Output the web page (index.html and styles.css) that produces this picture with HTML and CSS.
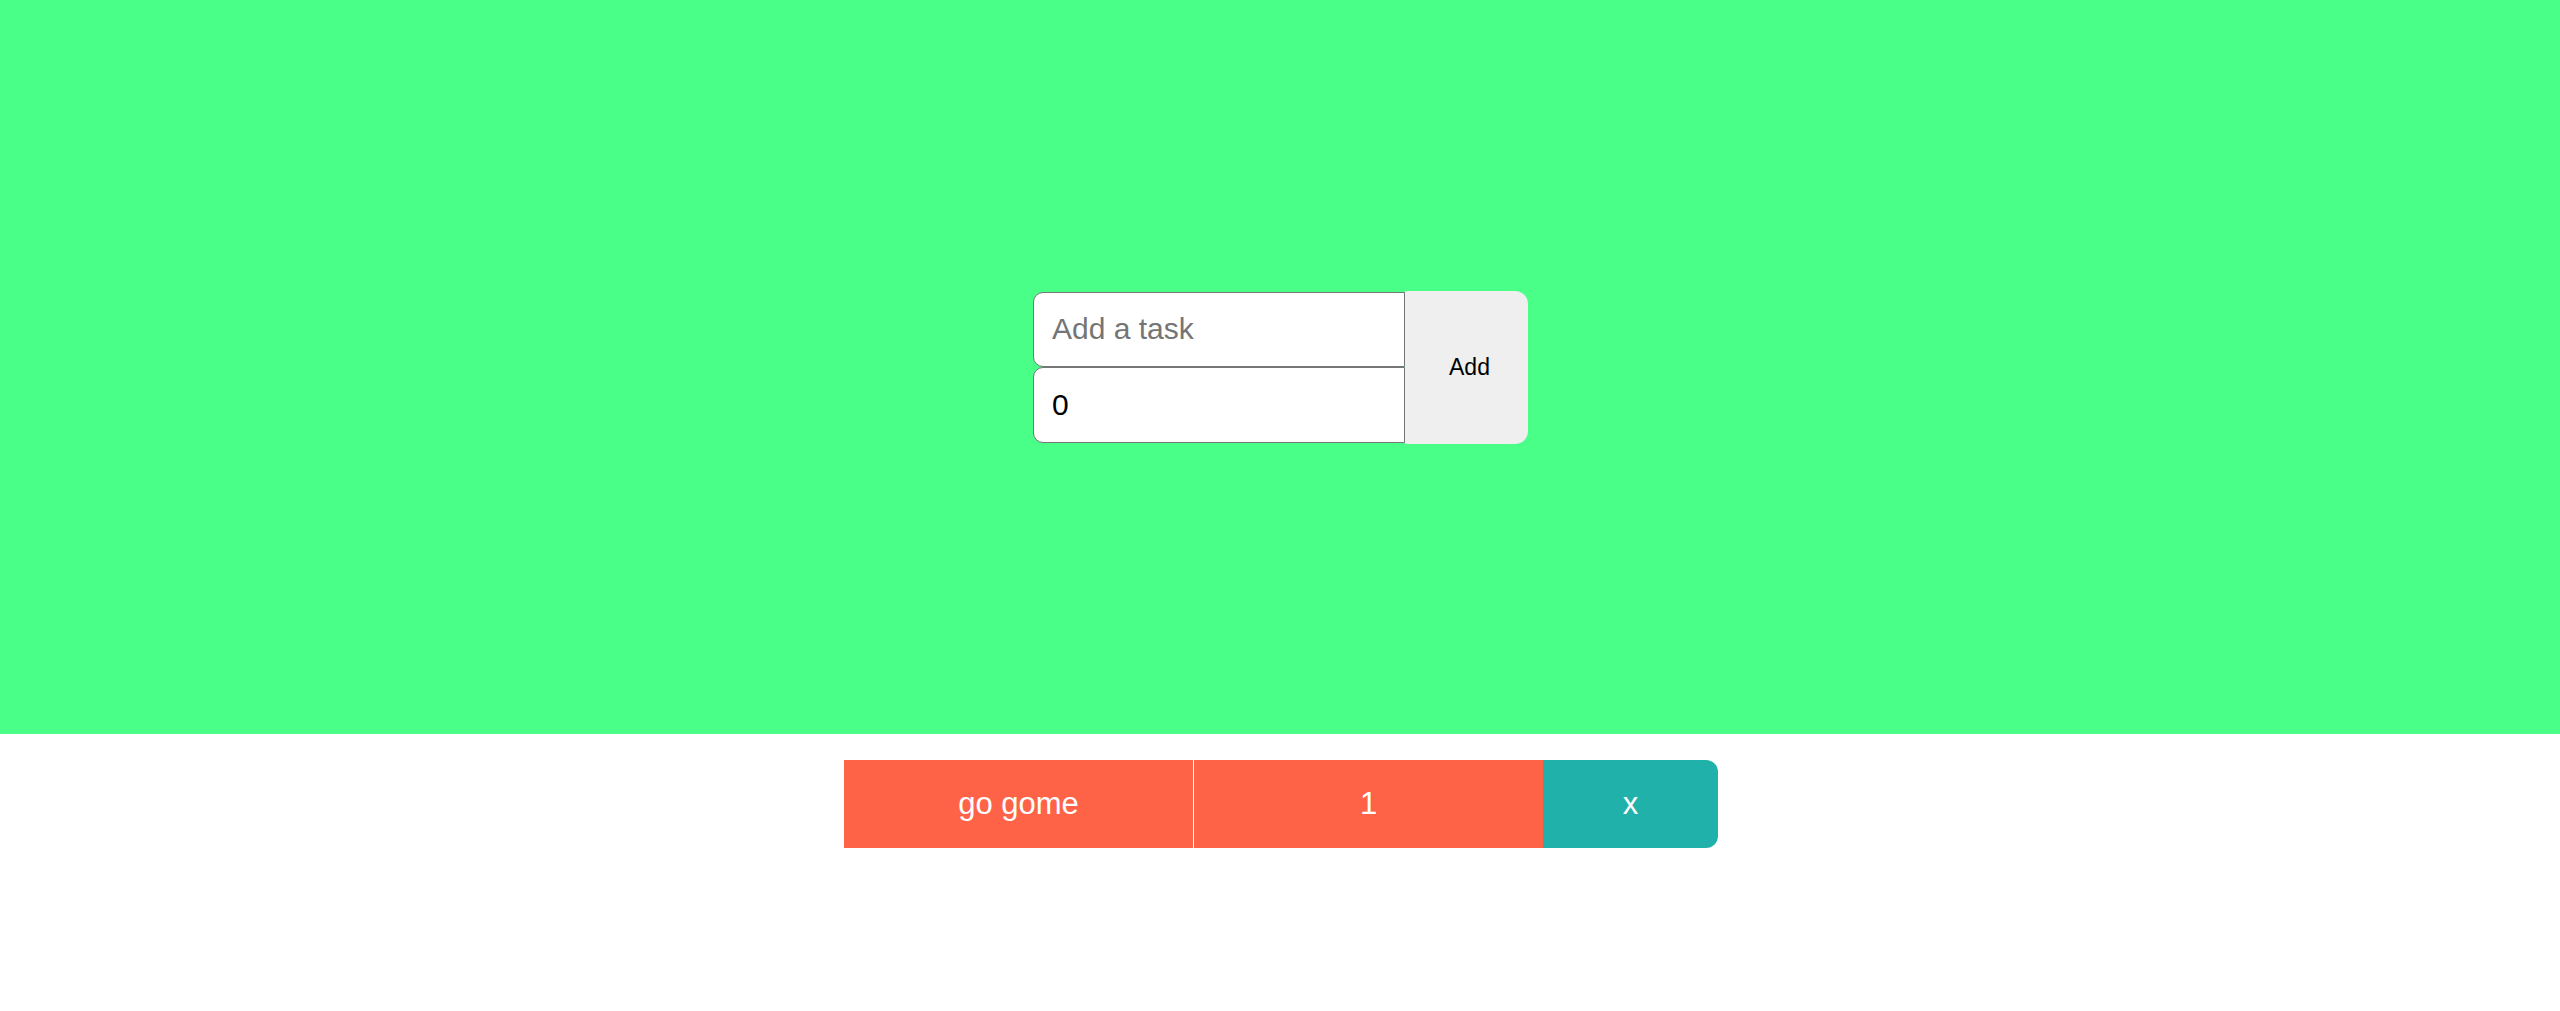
FILE: index.html
```html
<!DOCTYPE html>
<html lang="en">
<head>
<meta charset="utf-8">
<title>Tasks</title>
<link rel="stylesheet" href="styles.css">
</head>
<body>
  <section class="hero">
    <form class="task-form">
      <div class="fields">
        <input class="field" type="text" placeholder="Add a task">
        <input class="field" type="text" value="0">
      </div>
      <button class="add-btn" type="button">Add</button>
    </form>
  </section>
  <ul class="task-list">
    <li class="task">
      <span class="cell name">go gome</span>
      <span class="cell count">1</span>
      <button class="cell remove" type="button">x</button>
    </li>
  </ul>
</body>
</html>
```

FILE: styles.css
```css
html, body {
  margin: 0;
  padding: 0;
  background: #ffffff;
  font-family: "Liberation Sans", Arial, sans-serif;
}

.hero {
  height: 734px;
  background: #4aff88;
  display: flex;
  align-items: center;
  justify-content: center;
}

.task-form {
  display: flex;
  align-items: center;
  margin-left: 1px;
}

.fields {
  display: flex;
  flex-direction: column;
  width: 372px;
}

.field {
  box-sizing: border-box;
  height: 75.5px;
  width: 100%;
  margin: 0;
  padding: 0 16px 0 18px;
  border: 1px solid #767676;
  border-radius: 10px 0 0 10px;
  background: #ffffff;
  font-family: "Liberation Sans", Arial, sans-serif;
  font-size: 30px;
  color: #000000;
  outline: none;
}

.field::placeholder {
  color: #757575;
}

.add-btn {
  box-sizing: border-box;
  width: 123px;
  height: 153px;
  margin: 0;
  padding: 0 0 0 6px;
  border: none;
  border-radius: 0 13px 13px 0;
  background: #efefef;
  font-family: "Liberation Sans", Arial, sans-serif;
  font-size: 23px;
  color: #000000;
}

.task-list {
  list-style: none;
  margin: 26px 0 0;
  padding: 0 0 0 2px;
  display: flex;
  justify-content: center;
}

.task {
  display: flex;
  height: 88px;
  width: 874px;
}

.cell {
  box-sizing: border-box;
  display: flex;
  align-items: center;
  justify-content: center;
  height: 100%;
  font-family: "Liberation Sans", Arial, sans-serif;
  font-size: 31px;
  color: #ffffff;
}

.name {
  width: 350px;
  background: #ff6347;
  border-right: 1px solid #ffffff;
}

.count {
  width: 349px;
  background: #ff6347;
}

.remove {
  width: 175px;
  margin: 0;
  padding: 0;
  border: none;
  background: #20b2aa;
  border-radius: 0 12px 12px 0;
}
```
